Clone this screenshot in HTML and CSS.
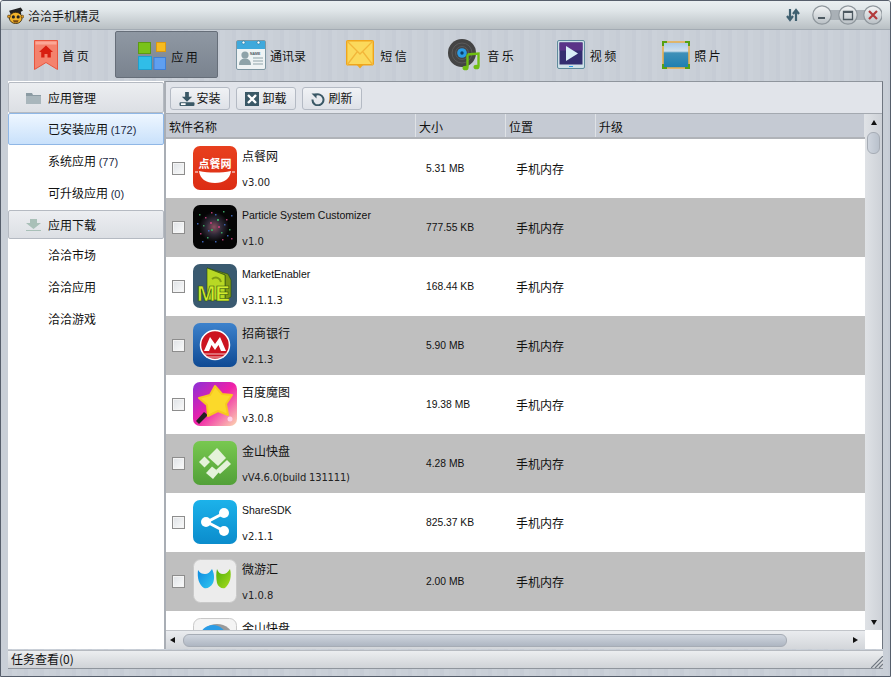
FILE: index.html
```html
<!DOCTYPE html>
<html lang="zh-CN">
<head>
<meta charset="utf-8">
<title>洽洽手机精灵</title>
<link rel="stylesheet" href="styles.css">
</head>
<body>
<div class="window">
  <header class="titlebar">
    <svg class="logo" viewBox="0 0 16 16"><path d="M2 3.500 13 .5l2 3-2 1 .5 2.500H3.500z" fill="#222"/><ellipse cx="8.200" cy="10.300" rx="6" ry="5.300" fill="#f3b52c" stroke="#3a2a10" stroke-width=".8"/><circle cx="1.800" cy="9" r="1.400" fill="#e09a20" stroke="#3a2a10" stroke-width=".5"/><circle cx="14.500" cy="9" r="1.300" fill="#e09a20" stroke="#3a2a10" stroke-width=".5"/><circle cx="6" cy="9.300" r="1.500" fill="#222"/><circle cx="10.500" cy="9.300" r="1.500" fill="#222"/><path d="M5.500 12.500h5.500l-1 2h-3.500z" fill="#7a4a10"/></svg>
    <span class="title-text">洽洽手机精灵</span>
    <svg class="sync" viewBox="0 0 14 14"><path d="M4 1v10M1 8l3 4 3-4M10 13V3M7 6l3-4 3 4" fill="none" stroke="#3f6070" stroke-width="2.200"/></svg>
    <svg class="winctl" viewBox="0 0 70 22">
      <defs><linearGradient id="wb" x1="0" y1="0" x2="0" y2="1"><stop offset="0" stop-color="#f4f6f7"/><stop offset="1" stop-color="#b8bfc4"/></linearGradient></defs>
      <rect x="8" y="6" width="54" height="10" fill="#a9b0b6"/>
      <circle cx="10" cy="11" r="9.200" fill="url(#wb)" stroke="#8f979d" stroke-width="1.200"/>
      <circle cx="36" cy="11" r="9.200" fill="url(#wb)" stroke="#8f979d" stroke-width="1.200"/>
      <circle cx="61" cy="11" r="9.200" fill="url(#wb)" stroke="#8f979d" stroke-width="1.200"/>
      <path d="M6 14h7" stroke="#4d5961" stroke-width="2"/>
      <path d="M31.500 7.500h9v8h-9z" fill="none" stroke="#4d5961" stroke-width="1.300"/><path d="M31.500 8h9" stroke="#4d5961" stroke-width="2"/>
      <path d="M57 7l8 8M65 7l-8 8" stroke="#b23a3a" stroke-width="2.200"/>
    </svg>
  </header>

  <nav class="nav">
    <a class="nav-item">
      <svg class="nav-icon" viewBox="0 0 24 30" width="24" height="30"><path d="M.5.500h23v29L12 22.500.5 29.500z" fill="#f4826d" stroke="#e8563f"/><path d="M1.500 1.500h21v3h-21z" fill="#fba796"/><path d="M12 5.500l7 6.500h-2.200v5.500h-3.300V14h-3v3.500H7.200V12H5z" fill="#d81e10"/></svg>
      <span>首 页</span>
    </a>
    <a class="nav-item active">
      <svg class="nav-icon apps" viewBox="0 0 28 28" width="28" height="28"><rect x=".5" y=".5" width="12" height="11" fill="#79c21a" stroke="#5d9a12"/><rect x="18.500" y=".5" width="9" height="9" fill="#f6bb1e" stroke="#db9a10"/><rect x=".5" y="14.500" width="13" height="13" fill="#30bde8" stroke="#1f9fcd"/><rect x="16" y="15.500" width="11.500" height="12" fill="#5f9ff0" stroke="#3f7fd6"/></svg>
      <span>应 用</span>
    </a>
    <a class="nav-item">
      <svg class="nav-icon" viewBox="0 0 30 30" width="30" height="30"><rect x=".5" y=".5" width="29" height="29" rx="1.500" fill="#eef3f4" stroke="#7e97a3"/><rect x="1" y="1" width="28" height="8" fill="#3fa9dc"/><circle cx="7.500" cy="2.500" r="1.500" fill="#fff" stroke="#1d6f99" stroke-width=".6"/><circle cx="22.500" cy="2.500" r="1.500" fill="#fff" stroke="#1d6f99" stroke-width=".6"/><circle cx="9" cy="15" r="3.600" fill="#8ea3a9"/><path d="M3 25c0-5 3-6.500 6-6.500s6 1.500 6 6.500z" fill="#8ea3a9"/><path d="M17 18h10M17 21h10M17 24h10" stroke="#8ea3a9"/><text x="14" y="14.500" class="svg-name">NAME</text></svg>
      <span>通讯录</span>
    </a>
    <a class="nav-item">
      <svg class="nav-icon" viewBox="0 0 28 29" width="28" height="29"><path d="M10 24l4 4.500 4-4.500z" fill="#f1a81f"/><rect x=".7" y=".7" width="26.600" height="24" rx="1" fill="#fbd95c" stroke="#efa51c" stroke-width="1.400"/><path d="M1 1l13 13L27 1M1 25l10-13M27 25L17 12" fill="none" stroke="#f2b63a" stroke-width="1.300"/></svg>
      <span>短 信</span>
    </a>
    <a class="nav-item">
      <svg class="nav-icon" viewBox="0 0 32 32" width="32" height="32"><circle cx="14" cy="14" r="14" fill="#444"/><circle cx="14" cy="14" r="10" fill="none" stroke="#5a5a5a"/><circle cx="14" cy="14" r="6.500" fill="none" stroke="#5a5a5a"/><circle cx="14" cy="14" r="4.800" fill="#2a9ce6"/><circle cx="14" cy="14" r="1.700" fill="#0c3d66"/><path d="M19.500 15.500l11-1v13" fill="none" stroke="#6fbe12" stroke-width="2.400"/><path d="M19.500 15.500v13" stroke="#6fbe12" stroke-width="2.400"/><ellipse cx="17.500" cy="29" rx="3" ry="2.300" fill="#6fbe12"/><ellipse cx="28.500" cy="28" rx="3" ry="2.300" fill="#6fbe12"/></svg>
      <span>音 乐</span>
    </a>
    <a class="nav-item">
      <svg class="nav-icon" viewBox="0 0 28 29" width="28" height="29"><rect x=".5" y=".5" width="27" height="28" rx="1.500" fill="#cfe1e8" stroke="#5f8a9c"/><rect x="2.500" y="2.500" width="23" height="22" fill="#342e70"/><rect x="2.500" y="2.500" width="23" height="8" fill="#5b3388"/><path d="M9 6l12 7.500L9 21z" fill="#d8edf6"/><rect x="12" y="26" width="4" height="1" fill="#2a9ce6"/></svg>
      <span>视 频</span>
    </a>
    <a class="nav-item">
      <svg class="nav-icon" viewBox="0 0 28 28" width="28" height="28"><defs><linearGradient id="sea" x1="0" y1="0" x2="0" y2="1"><stop offset="0" stop-color="#a8c8e8"/><stop offset=".35" stop-color="#cfe0ee"/><stop offset=".42" stop-color="#3f90b8"/><stop offset="1" stop-color="#1c7eb0"/></linearGradient></defs><rect x="1" y="1" width="26" height="26" fill="url(#sea)" stroke="#e8b050" stroke-width="1.600"/><path d="M0 0h5v2H2v3H0zM28 0h-5v2h3v3h2zM0 28h5v-2H2v-3H0zM28 28h-5v-2h3v-3h2z" fill="#57a010"/></svg>
      <span>照 片</span>
    </a>
  </nav>

  <div class="workspace">
    <aside class="sidebar">
      <div class="side-head">
        <svg class="side-icon" viewBox="0 0 15 12"><path d="M0 1h6l1 2h8v9H0z" fill="#8b9ba3"/><rect y="4" width="15" height="8" fill="#a9b6bc"/></svg>
        <span>应用管理</span>
      </div>
      <div class="side-item selected">已安装应用 <span class="count">(172)</span></div>
      <div class="side-item">系统应用 <span class="count">(77)</span></div>
      <div class="side-item">可升级应用 <span class="count">(0)</span></div>
      <div class="side-head second">
        <svg class="side-icon" viewBox="0 0 15 12"><path d="M4 0h7v4h4l-7.500 6L0 4h4z" fill="#a9c0b8"/><rect y="11" width="15" height="1" fill="#a9c0b8"/></svg>
        <span>应用下载</span>
      </div>
      <div class="side-item">洽洽市场</div>
      <div class="side-item">洽洽应用</div>
      <div class="side-item">洽洽游戏</div>
    </aside>

    <main class="main">
      <div class="toolbar">
        <button class="tool-btn install"><svg viewBox="0 0 16 15"><path d="M6 0h4v5h3.500L8 10.500 2.500 5H6z" fill="#3a5866"/><rect y="11" width="16" height="4" rx="1" fill="#3a5866"/><rect x="1.500" y="12" width="5" height="2" fill="#fff"/></svg><span>安装</span></button>
        <button class="tool-btn"><svg viewBox="0 0 14 14"><rect width="14" height="14" fill="#3a5866"/><path d="M3 3l8 8M11 3l-8 8" stroke="#fff" stroke-width="2.400"/></svg><span>卸载</span></button>
        <button class="tool-btn"><svg viewBox="0 0 14 14"><path d="M4 3.200A5.500 5.500 0 1 1 1.500 7.500" fill="none" stroke="#3a5866" stroke-width="2"/><path d="M.5 1.500h5v5z" fill="#3a5866"/></svg><span>刷新</span></button>
      </div>
      <div class="grid-area">
        <div class="grid-left">
          <div class="grid-head">
            <div class="col-name">软件名称</div>
            <div class="col-size">大小</div>
            <div class="col-loc">位置</div>
            <div class="col-up">升级</div>
          </div>
          <div class="rows">
            <div class="row">
              <span class="check"></span>
              <svg class="app" viewBox="0 0 44 44"><defs><linearGradient id="dian" x1="0" y1="0" x2="0" y2="1"><stop offset="0" stop-color="#e8401e"/><stop offset="1" stop-color="#dc2c14"/></linearGradient></defs><rect width="44" height="44" rx="7" fill="url(#dian)"/><path d="M6 25c10 2 22 2 32 0-1 8-7 12-16 12S7 33 6 25z" fill="#fff"/><text x="22" y="22" class="svg-dish">点餐网</text><path d="M2 26h3M39 26h3" stroke="#fff"/></svg>
              <div class="info"><div class="name cjk">点餐网</div><div class="ver">v3.00</div></div>
              <div class="size">5.31 MB</div><div class="loc">手机内存</div>
            </div>
            <div class="row">
              <span class="check"></span>
              <svg class="app" viewBox="0 0 44 44"><defs><radialGradient id="glow"><stop offset="0" stop-color="#8a5060"/><stop offset=".5" stop-color="#2f2a38"/><stop offset="1" stop-color="#050505"/></radialGradient></defs><rect width="44" height="44" rx="7" fill="#050505"/><circle cx="21" cy="22" r="15" fill="url(#glow)"/><g fill="#3aa060"><rect x="6" y="9" width="1.500" height="1.500"/><rect x="30" y="6" width="1.500" height="1.500"/><rect x="14" y="32" width="1.500" height="1.500"/><rect x="36" y="24" width="1.500" height="1.500"/><rect x="24" y="14" width="2" height="2"/><rect x="18" y="24" width="2" height="2"/><rect x="10" y="20" width="1.500" height="1.500"/><rect x="28" y="27" width="1.500" height="1.500"/></g><g fill="#b03a70"><rect x="12" y="12" width="1.500" height="1.500"/><rect x="33" y="14" width="1.500" height="1.500"/><rect x="7" y="28" width="1.500" height="1.500"/><rect x="29" y="34" width="1.500" height="1.500"/><rect x="18" y="7" width="1.500" height="1.500"/><rect x="25" y="21" width="2" height="2"/><rect x="17" y="17" width="2" height="2"/><rect x="38" y="33" width="1.500" height="1.500"/></g><g fill="#3a60b0"><rect x="4" y="18" width="1.500" height="1.500"/><rect x="22" y="36" width="1.500" height="1.500"/><rect x="38" y="10" width="1.500" height="1.500"/><rect x="34" y="30" width="1.500" height="1.500"/><rect x="15" y="25" width="1.500" height="1.500"/><rect x="31" y="19" width="1.500" height="1.500"/><rect x="9" y="36" width="1.500" height="1.500"/><rect x="22" y="9" width="1.500" height="1.500"/></g></svg>
              <div class="info"><div class="name">Particle System Customizer</div><div class="ver">v1.0</div></div>
              <div class="size">777.55 KB</div><div class="loc">手机内存</div>
            </div>
            <div class="row">
              <span class="check"></span>
              <svg class="app" viewBox="0 0 44 44"><rect width="44" height="44" rx="7" fill="#3a5a70"/><path d="M14 4l21 6 3 6v17l-6 3V11z" fill="#7e9a14" stroke="#2a4a10" stroke-width=".6"/><path d="M14 4l18 7v25H14z" fill="#b8d824" stroke="#2a4a10" stroke-width=".6"/><path d="M19 15c4-3 8-1 9 3" fill="none" stroke="#7e9a14" stroke-width="2"/><text x="4" y="37" class="svg-me">ME</text></svg>
              <div class="info"><div class="name">MarketEnabler</div><div class="ver">v3.1.1.3</div></div>
              <div class="size">168.44 KB</div><div class="loc">手机内存</div>
            </div>
            <div class="row">
              <span class="check"></span>
              <svg class="app" viewBox="0 0 44 44"><defs><linearGradient id="cmb" x1="0" y1="0" x2="0" y2="1"><stop offset="0" stop-color="#3d82cc"/><stop offset="1" stop-color="#0f4a94"/></linearGradient></defs><rect width="44" height="44" rx="7" fill="url(#cmb)"/><circle cx="22" cy="22" r="14.500" fill="#cc1420" stroke="#fff" stroke-width="1.500"/><path d="M11 28l6-14 5 7 5-7 6 14h-5l-2.500-6-3.500 5-3.500-5-2.500 6z" fill="#fff"/><path d="M10 31h24M13 34h18" stroke="#f4d8d8" stroke-width=".9"/></svg>
              <div class="info"><div class="name cjk">招商银行</div><div class="ver">v2.1.3</div></div>
              <div class="size">5.90 MB</div><div class="loc">手机内存</div>
            </div>
            <div class="row">
              <span class="check"></span>
              <svg class="app" viewBox="0 0 44 44"><defs><linearGradient id="bd" x1="0" y1="0" x2="1" y2="1"><stop offset="0" stop-color="#8a30d8"/><stop offset=".5" stop-color="#f020a8"/><stop offset="1" stop-color="#fcd8b0"/></linearGradient></defs><rect width="44" height="44" rx="7" fill="url(#bd)"/><path d="M15 33l-4-3-8 9 3 3z" fill="#222"/><path d="M22 4l7 8 10 1-6 9 2 11-10-4-10 5-1-11-8-7 11-3z" fill="#fbd92a" stroke="#f7c81e" stroke-width="2" stroke-linejoin="round"/><circle cx="37" cy="37" r="2.500" fill="#ffd0e8"/></svg>
              <div class="info"><div class="name cjk">百度魔图</div><div class="ver">v3.0.8</div></div>
              <div class="size">19.38 MB</div><div class="loc">手机内存</div>
            </div>
            <div class="row">
              <span class="check"></span>
              <svg class="app" viewBox="0 0 44 44"><defs><linearGradient id="ks" x1="0" y1="0" x2="0" y2="1"><stop offset="0" stop-color="#78c850"/><stop offset="1" stop-color="#52a038"/></linearGradient></defs><rect width="44" height="44" rx="7" fill="url(#ks)"/><g fill="#e4f2da"><path d="M24 7l9 10-8 8-10-9z"/><path d="M11.500 15.500l5.500 5.500-5.500 5.500L6 21z"/><path d="M34 19l4 4-11 10-4-4z"/><path d="M19 25.500l7 5.500-6 7-7-6z"/></g></svg>
              <div class="info"><div class="name cjk">金山快盘</div><div class="ver tight">vV4.6.0(build 131111)</div></div>
              <div class="size">4.28 MB</div><div class="loc">手机内存</div>
            </div>
            <div class="row">
              <span class="check"></span>
              <svg class="app" viewBox="0 0 44 44"><defs><linearGradient id="ss" x1="0" y1="0" x2="0" y2="1"><stop offset="0" stop-color="#1cb2ea"/><stop offset="1" stop-color="#0b8ccc"/></linearGradient></defs><rect width="44" height="44" rx="7" fill="url(#ss)"/><path d="M31 13L14 22l17 9" fill="none" stroke="#fff" stroke-width="3"/><circle cx="31" cy="13" r="5" fill="#fff"/><circle cx="13" cy="22" r="5" fill="#fff"/><circle cx="31" cy="31" r="5" fill="#fff"/></svg>
              <div class="info"><div class="name">ShareSDK</div><div class="ver">v2.1.1</div></div>
              <div class="size">825.37 KB</div><div class="loc">手机内存</div>
            </div>
            <div class="row">
              <span class="check"></span>
              <svg class="app" viewBox="0 0 44 44"><defs><linearGradient id="wy1" x1="0" y1="0" x2="1" y2="1"><stop offset="0" stop-color="#0c88e0"/><stop offset="1" stop-color="#30c8f0"/></linearGradient><linearGradient id="wy2" x1="0" y1="0" x2="1" y2="1"><stop offset="0" stop-color="#50b008"/><stop offset="1" stop-color="#a8dc20"/></linearGradient></defs><rect x=".5" y=".5" width="43" height="43" rx="7" fill="#ececec" stroke="#c9c9c9"/><path d="M5 11c2 3 4 4 7 4s5-2 7-5c2 4 3 9 1 14-2 4-6 6-9 5-5-3-7-10-6-18z" fill="url(#wy1)"/><path d="M24 10c1 3 3 5 6 5s5-2 7-5c2 7 0 15-5 19-3 1-7-1-8-5-1-5-1-10 0-14z" fill="url(#wy2)"/></svg>
              <div class="info"><div class="name cjk">微游汇</div><div class="ver">v1.0.8</div></div>
              <div class="size">2.00 MB</div><div class="loc">手机内存</div>
            </div>
            <div class="row">
              <span class="check"></span>
              <svg class="app" viewBox="0 0 44 44"><rect x=".5" y=".5" width="43" height="43" rx="7" fill="#f4f4f4" stroke="#c9c9c9"/><ellipse cx="24" cy="20" rx="16" ry="14" fill="#9a9a9a"/><ellipse cx="20" cy="19" rx="13" ry="12" fill="#2a9ce6"/></svg>
              <div class="info"><div class="name cjk">金山快盘</div></div>
            </div>
          </div>
          <div class="hscroll">
            <span class="arrow-left"></span>
            <span class="hthumb"></span>
            <span class="arrow-right"></span>
          </div>
        </div>
        <div class="vscroll">
          <span class="arrow-up"></span>
          <span class="vthumb"></span>
          <span class="arrow-down"></span>
          <span class="corner"></span>
        </div>
      </div>
    </main>
  </div>

  <footer class="status">
    <span>任务查看(0)</span>
    <svg class="grip" viewBox="0 0 12 12"><path d="M0 12L12 0M4 12l8-8M8 12l4-4" stroke="#6f7780" stroke-width="1.200"/></svg>
  </footer>
</div>
</body>
</html>
```
FILE: styles.css
```css
* { box-sizing: border-box; }
html, body { margin: 0; padding: 0; width: 891px; height: 677px; overflow: hidden; background: #fff; }
body { font: 12px "Noto Sans CJK SC", "Liberation Sans", sans-serif; color: #111; }

.window {
  width: 891px; height: 677px; display: flex; flex-direction: column;
  border: 1px solid #565e6b; border-radius: 3px 3px 0 0; overflow: hidden;
  background: repeating-linear-gradient(90deg, #c9cfd7 0 7px, #c6ccd5 7px 11px, #cbd1d9 11px 16px);
}

.titlebar {
  height: 29px; flex: none; display: flex; align-items: center; padding: 0 8px 0 6px;
  background: linear-gradient(#eaeff1, #dfe5e8 35%, #b9c0c4);
  border-bottom: 1px solid #a3abb3;
}
.logo { width: 17px; height: 17px; margin-right: 4px; }
.title-text { color: #1a1a1a; }
.sync { width: 14px; height: 14px; margin-left: auto; margin-right: 12px; }
.winctl { width: 70px; height: 22px; }

.nav {
  height: 51px; flex: none; padding: 1px 0 0 7px;
  display: grid; grid-template-columns: 107px 103px 106px 105px 104px 108px 101px; justify-content: start;
}
.nav-item { height: 47px; display: flex; align-items: center; justify-content: center; gap: 4px; color: #111; }
.nav-item span { padding-top: 1px; }
.nav-item.active {
  background: linear-gradient(#8f98a3, #7a838f);
  border: 1px solid #666e79; border-radius: 2px; gap: 5px; padding-left: 3px;
}
.nav-item.active span { padding-top: 4px; }
.nav-icon { flex: none; }
.nav-icon.apps { margin-top: 2px; }
.nav-item:nth-child(4) { gap: 6px; }
.nav-item:nth-child(5) { gap: 7px; }
.nav-item:nth-child(6) { gap: 5px; padding-right: 1px; }
.svg-name { font: bold 3.500px "Liberation Sans", sans-serif; fill: #4a5a60; }
.svg-dish { font: bold 11px "Noto Sans CJK SC", sans-serif; fill: #fff; text-anchor: middle; }
.svg-me { font: bold 22px "Liberation Sans", sans-serif; fill: #d0ec2c; stroke: #2a4a10; stroke-width: .6px; }

.workspace { flex: 1; min-height: 0; display: flex; padding: 0 7px; }

.sidebar { width: 156px; flex: none; background: #fff; padding-top: 1px; }
.side-head {
  height: 31px; display: flex; align-items: center; gap: 7px; padding-left: 17px;
  background: linear-gradient(#eceef1, #dcdfe4);
  border: 1px solid #b5bac2; border-radius: 2px;
}
.side-head.second { height: 29px; margin-top: 1px; }
.side-icon { width: 15px; height: 12px; flex: none; }
.side-item { height: 32px; line-height: 31px; padding-left: 40px; }
.side-item.selected {
  background: linear-gradient(#eef6ff, #c9e1fb);
  border: 1px solid #8fb7e6; border-radius: 2px; padding-left: 39px; line-height: 29px;
}
.count { font: 11px "Liberation Sans", sans-serif; color: #1c2a44; }

.main {
  flex: 1; min-width: 0; display: flex; flex-direction: column;
  border-left: 2px solid #a9aeb5; border-top: 1px solid #8f959d; border-right: 1px solid #6f7680;
}
.toolbar {
  height: 32px; flex: none; display: flex; align-items: flex-start; gap: 6px;
  padding: 5px 0 0 4px; background: #e1e4ea; border-bottom: 1px solid #a4a9b0;
}
.tool-btn {
  width: 60px; height: 23px; display: flex; align-items: center; justify-content: center; gap: 3px; padding: 0;
  font: inherit; color: #111;
  background: linear-gradient(#f0f2f5, #dee1e7);
  border: 1px solid #b4bac4; border-radius: 3px;
}
.tool-btn span { margin-top: -2px; }
.tool-btn svg { width: 14px; height: 14px; flex: none; }
.tool-btn.install { gap: 1px; }
.tool-btn.install svg { width: 16px; }

.grid-area { flex: 1; min-height: 0; display: flex; }
.grid-left { flex: 1; min-width: 0; display: flex; flex-direction: column; }
.grid-head {
  height: 25px; flex: none; display: grid; grid-template-columns: 250px 90px 90px 1fr;
  background: #c5cad3; border-bottom: 2px solid #b0b3b8;
}
.grid-head div { padding: 2px 0 0 3px; line-height: 21px; border-right: 1px solid #dfe2e6; }

.rows { flex: 1; min-height: 0; overflow: hidden; background: #fff; }
.row { height: 59px; display: flex; align-items: center; padding-left: 6px; }
.row:nth-child(even) { background: #bfbfbf; }
.check {
  width: 13px; height: 13px; flex: none; margin-right: 8px;
  border: 1px solid #8d8d8d; background: linear-gradient(135deg, #dfe2e6, #fafbfb);
  box-shadow: inset 0 0 0 1px #f4f4f4;
}
.app { width: 44px; height: 44px; flex: none; margin-top: -1px; }
.info { width: 184px; height: 49px; margin-left: 5px; padding-top: 4px; }
.name { height: 26px; font: 10.500px/16px "Liberation Sans", sans-serif; color: #111; white-space: nowrap; }
.name.cjk { font: 12px/16px "Noto Sans CJK SC", sans-serif; }
.ver { height: 18px; font: 10px/18px "DejaVu Sans", sans-serif; color: #222; white-space: nowrap; }
.ver.tight { letter-spacing: -.2px; }
.size { width: 90px; font: 10.300px/16px "Liberation Sans", sans-serif; color: #111; }
.loc { width: 60px; }

.hscroll {
  height: 19px; flex: none; position: relative; display: flex; align-items: center; padding-left: 4px;
  background: linear-gradient(#eaecef, #d3d6da); border-top: 1px solid #c2c5ca;
}
.arrow-left { width: 0; height: 0; border: 3px solid transparent; border-right: 5px solid #111; border-left: 0; }
.hthumb {
  width: 604px; height: 13px; margin-left: 8px; border: 1px solid #a6acb5; border-radius: 6px;
  background: linear-gradient(#cfd5de, #aeb6c2);
}
.arrow-right { width: 0; height: 0; margin-left: auto; margin-right: 7px; border: 3px solid transparent; border-left: 5px solid #111; border-right: 0; }

.vscroll {
  width: 17px; flex: none; display: flex; flex-direction: column; align-items: center; padding-top: 6px;
  background: linear-gradient(90deg, #dfe2e6, #cdd1d7);
}
.arrow-up { width: 0; height: 0; flex: none; border: 3px solid transparent; border-bottom: 5px solid #111; border-top: 0; }
.vthumb {
  width: 13px; height: 22px; flex: none; margin-top: 7px; border: 1px solid #a6acb5; border-radius: 6px;
  background: linear-gradient(90deg, #cfd5de, #b9c1cc);
}
.arrow-down { width: 0; height: 0; flex: none; margin-top: auto; margin-bottom: 5px; border: 3px solid transparent; border-top: 5px solid #111; border-bottom: 0; }
.corner { width: 17px; height: 19px; flex: none; background: #fff; }

.status {
  height: 19px; flex: none; margin: 1px 7px 7px; padding: 0 0 2px 3px;
  display: flex; align-items: center; justify-content: space-between;
  background: linear-gradient(#eceef0, #d0d3d7); border-top: 1px solid #b6bac0; border-bottom: 1px solid #8f959d;
  color: #111;
}
.grip { width: 12px; height: 12px; align-self: flex-end; margin-bottom: -2px; }
```
